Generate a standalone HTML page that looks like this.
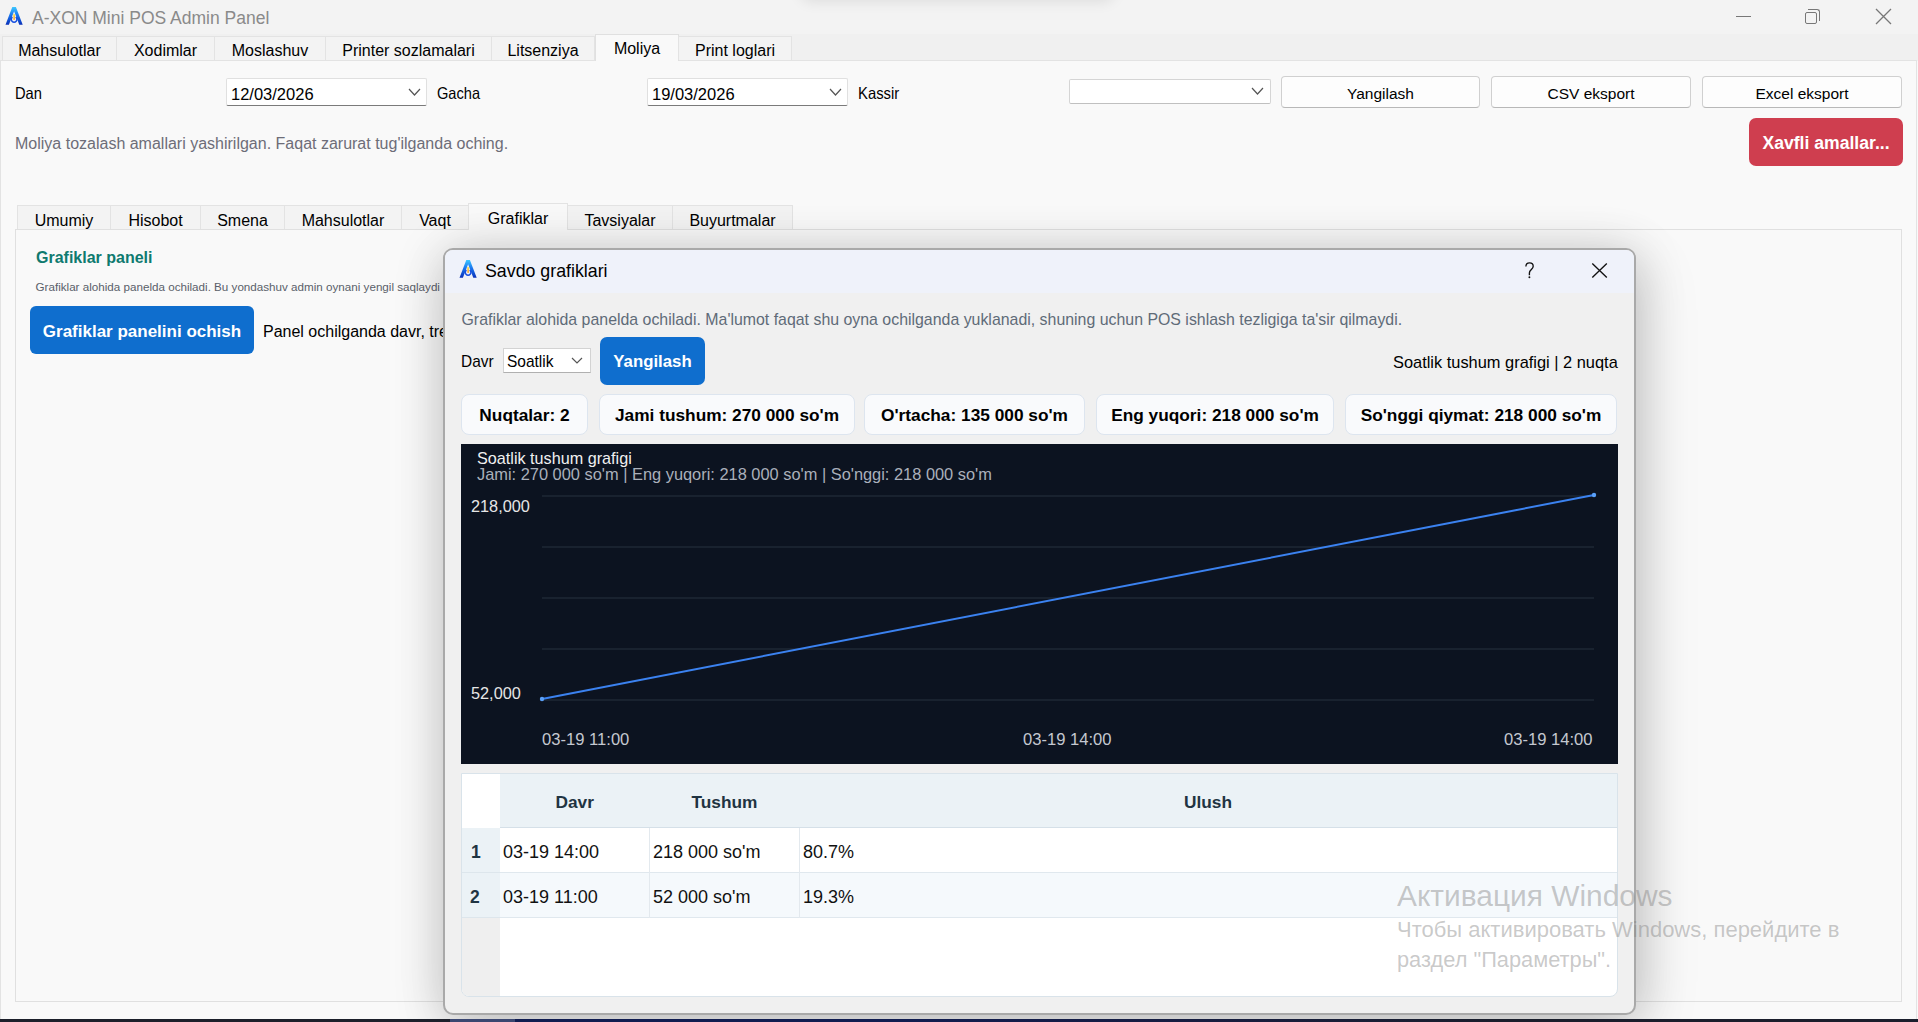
<!DOCTYPE html>
<html><head><meta charset="utf-8">
<style>
*{box-sizing:border-box;margin:0;padding:0}
html,body{width:1918px;height:1022px;overflow:hidden;background:#f9f9f9;font-family:"Liberation Sans",sans-serif;color:#000}
.a{position:absolute;white-space:nowrap}
#titlebar{position:absolute;left:0;top:0;width:1918px;height:34px;background:#f3f3f3}
#tabbar{position:absolute;left:0;top:34px;width:1918px;height:27px;background:#f0f0f0}
.tab{position:absolute;top:36px;height:24px;background:#f3f3f3;border:1px solid #e3e3e3;border-bottom:none;font-size:16px;text-align:center;line-height:28px}
.tab.sel{top:34px;height:27px;background:#f9f9f9;border-color:#e0e0e0;line-height:27px}
#content{position:absolute;left:0px;top:60px;width:1917px;height:960px;background:#f9f9f9;border-top:1px solid #e3e3e3;border-left:1px solid #e3e3e3;border-right:1px solid #e3e3e3}
.lbl{position:absolute;font-size:16px;line-height:16px}
.combo{position:absolute;background:#fff;border:1px solid #e0e0e0;border-bottom:1.5px solid #7a7a7a;border-radius:2px}
.btn{position:absolute;background:#fdfdfd;border:1px solid #d0d0d0;border-bottom-color:#b8b8b8;border-radius:4px;font-size:15.5px;text-align:center}
.chev{position:absolute;width:9px;height:9px;border-right:1.3px solid #444;border-bottom:1.3px solid #444;transform:rotate(45deg)}
.itab{position:absolute;top:205px;height:24px;background:#f3f3f3;border:1px solid #e3e3e3;border-bottom:none;font-size:16px;text-align:center;line-height:29px}
.itab.sel{top:203px;height:27px;background:#f9f9f9}
.card{position:absolute;top:394px;height:41px;background:#f9fafc;border:1px solid #dde5ef;border-radius:8px;font-weight:bold;font-size:17.3px;line-height:41px;text-align:center}
.th{position:absolute;top:794px;font-weight:bold;font-size:17.3px;line-height:17.3px;color:#1f3442}
.rn{position:absolute;font-weight:bold;font-size:17.5px;line-height:18px;color:#1f3442}
.td{position:absolute;font-size:18px;line-height:18px;color:#111}
</style></head>
<body>
<div id="titlebar"></div>
<div id="tabbar"></div>
<div id="content"></div>

<!-- title -->
<svg width="0" height="0" style="position:absolute"><defs>
<linearGradient id="g1" x1="0" y1="0" x2="0" y2="1"><stop offset="0" stop-color="#3cc8ff"/><stop offset="0.45" stop-color="#1a78f0"/><stop offset="1" stop-color="#0a30b8"/></linearGradient>
<linearGradient id="g2" x1="0" y1="0" x2="0" y2="1"><stop offset="0" stop-color="#ffe020"/><stop offset="1" stop-color="#ff8a00"/></linearGradient>
<symbol id="axon" viewBox="0 0 18 18"><path d="M7.3 0 L10.9 0 L17.7 17.7 L14.3 17.7 L9.1 4.2 L3.9 17.7 L0.5 17.7 Z" fill="url(#g1)"/>
<path d="M10.7 10.1 A2.8 2.8 0 1 1 7.5 10.1" fill="none" stroke="#1850e0" stroke-width="1.5"/>
<rect x="8.4" y="6.9" width="1.4" height="6.1" rx="0.7" fill="url(#g2)"/></symbol></defs></svg>
<svg class="a" style="left:5px;top:7px" width="18" height="18"><use href="#axon"/></svg>
<div class="a" style="left:32px;top:8px;font-size:17.5px;color:#8a8a8a;line-height:20px">A-XON Mini POS Admin Panel</div>
<!-- window controls -->
<div class="a" style="left:1736px;top:16px;width:15px;height:1px;background:#777"></div>
<div class="a" style="left:1805px;top:12px;width:12px;height:12px;border:1.3px solid #777;border-radius:2px"></div>
<div class="a" style="left:1808px;top:9px;width:12px;height:12px;border-top:1.3px solid #777;border-right:1.3px solid #777;border-radius:0 3px 0 0"></div>
<svg class="a" style="left:1875px;top:8px" width="17" height="17" viewBox="0 0 17 17"><path d="M1 1L16 16M16 1L1 16" stroke="#777" stroke-width="1.3"/></svg>

<div class="a" style="left:800px;top:-24px;width:315px;height:24px;border-radius:12px;box-shadow:0 2px 14px rgba(0,0,0,0.09);background:#f3f3f3"></div>
<!-- top tabs -->
<div class="tab" style="left:2px;width:115px">Mahsulotlar</div>
<div class="tab" style="left:116px;width:99px">Xodimlar</div>
<div class="tab" style="left:214px;width:112px">Moslashuv</div>
<div class="tab" style="left:325px;width:167px">Printer sozlamalari</div>
<div class="tab" style="left:491px;width:104px">Litsenziya</div>
<div class="tab sel" style="left:595px;width:84px">Moliya</div>
<div class="tab" style="left:678px;width:114px">Print loglari</div>

<!-- filter row -->
<div class="lbl" style="left:15px;top:84.8px;font-size:16.5px;line-height:16.5px;transform:scaleX(0.89);transform-origin:0 0">Dan</div>
<div class="combo" style="left:226px;top:78px;width:201px;height:28px"></div>
<div class="lbl" style="left:231px;top:85.6px;font-size:16.5px;line-height:16.5px">12/03/2026</div>
<svg class="a" style="left:408px;top:88px" width="13" height="8" viewBox="-1 -1 13 8"><path d="M0 0L5.5 6L11 0" fill="none" stroke="#555" stroke-width="1.2"/></svg>
<div class="lbl" style="left:437px;top:84.8px;font-size:16.5px;line-height:16.5px;transform:scaleX(0.885);transform-origin:0 0">Gacha</div>
<div class="combo" style="left:647px;top:78px;width:201px;height:28px"></div>
<div class="lbl" style="left:652px;top:85.6px;font-size:16.5px;line-height:16.5px">19/03/2026</div>
<svg class="a" style="left:829px;top:88px" width="13" height="8" viewBox="-1 -1 13 8"><path d="M0 0L5.5 6L11 0" fill="none" stroke="#555" stroke-width="1.2"/></svg>
<div class="lbl" style="left:857.5px;top:84.8px;font-size:16.5px;line-height:16.5px;transform:scaleX(0.9);transform-origin:0 0">Kassir</div>
<div class="a" style="left:1069px;top:79px;width:202px;height:25px;background:#fff;border:1px solid #d5d5d5;border-bottom-color:#c0c0c0;border-radius:2px"></div>
<svg class="a" style="left:1251px;top:87px" width="13" height="8" viewBox="-1 -1 13 8"><path d="M0 0L5.5 6L11 0" fill="none" stroke="#555" stroke-width="1.2"/></svg>
<div class="btn" style="left:1281px;top:76px;width:199px;height:32px;line-height:33px">Yangilash</div>
<div class="btn" style="left:1491px;top:76px;width:200px;height:32px;line-height:33px">CSV eksport</div>
<div class="btn" style="left:1702px;top:76px;width:200px;height:32px;line-height:33px">Excel eksport</div>

<div class="lbl" style="left:15px;top:136px;color:#6d6d78">Moliya tozalash amallari yashirilgan. Faqat zarurat tug'ilganda oching.</div>
<div class="a" style="left:1749px;top:118px;width:154px;height:48px;background:#cf3e4f;border-radius:7px;color:#fff;font-weight:bold;font-size:17.6px;line-height:51px;text-align:center">Xavfli amallar...</div>

<!-- inner tabs -->
<div class="a" style="left:15px;top:229px;width:1887px;height:773px;border:1px solid #e0e0e0;background:#f9f9f9"></div>
<div class="itab" style="left:17px;width:94px">Umumiy</div>
<div class="itab" style="left:110px;width:91px">Hisobot</div>
<div class="itab" style="left:200px;width:85px">Smena</div>
<div class="itab" style="left:284px;width:118px">Mahsulotlar</div>
<div class="itab" style="left:401px;width:68px">Vaqt</div>
<div class="itab sel" style="left:468px;width:100px">Grafiklar</div>
<div class="itab" style="left:567px;width:106px">Tavsiyalar</div>
<div class="itab" style="left:672px;width:121px">Buyurtmalar</div>

<div class="a" style="left:36px;top:249px;font-size:16px;font-weight:bold;color:#0f7a6f">Grafiklar paneli</div>
<div class="a" style="left:35.5px;top:280.8px;font-size:11.65px;line-height:11.65px;color:#5a5f6a">Grafiklar alohida panelda ochiladi. Bu yondashuv admin oynani yengil saqlaydi</div>
<div class="a" style="left:30px;top:306px;width:224px;height:48px;background:#0f6ece;border-radius:6px;color:#fff;font-weight:bold;font-size:17px;line-height:52px;text-align:center">Grafiklar panelini ochish</div>
<div class="lbl" style="left:263px;top:324px">Panel ochilganda davr, trend va eng kuchli davrlar ko'rinadi.</div>

<!-- dialog placeholder -->
<div id="dlg" class="a" style="left:443px;top:248px;width:1193px;height:767px;background:#f0f0f0;border:2px solid #a9a9a9;border-radius:10px;box-shadow:0 6px 50px rgba(0,0,0,0.2), 10px 14px 60px rgba(0,0,0,0.1);overflow:hidden">
 <div class="a" style="left:0;top:0;width:1189px;height:43px;background:#eff2fa"></div>
</div>
<!-- dialog title -->
<svg class="a" style="left:459px;top:260px" width="18" height="18"><use href="#axon"/></svg>
<div class="a" style="left:485px;top:262.5px;font-size:17.8px;line-height:17.8px">Savdo grafiklari</div>
<svg class="a" style="left:1520px;top:258px" width="20" height="26" viewBox="1520 258 20 26"><path d="M1525.9 266.6 C1525.9 264.3 1527.6 262.9 1529.6 262.9 C1531.7 262.9 1533.2 264.4 1533.2 266.3 C1533.2 268.2 1532 269.1 1530.9 270 C1529.8 270.9 1529.4 271.6 1529.4 273 L1529.4 275.2" fill="none" stroke="#111" stroke-width="1.35"/><circle cx="1529.4" cy="277.3" r="0.95" fill="#111"/></svg>
<svg class="a" style="left:1590px;top:261px" width="20" height="20" viewBox="1590 261 20 20"><path d="M1592.3 263.5L1606.8 277.6M1606.8 263.5L1592.3 277.6" stroke="#111" stroke-width="1.35"/></svg>

<div class="a" style="left:461.5px;top:311.8px;font-size:15.9px;line-height:15.9px;color:#5f6b78">Grafiklar alohida panelda ochiladi. Ma'lumot faqat shu oyna ochilganda yuklanadi, shuning uchun POS ishlash tezligiga ta'sir qilmaydi.</div>

<div class="a" style="left:461px;top:353.5px;font-size:16.6px;line-height:16.6px;transform:scaleX(0.93);transform-origin:0 0">Davr</div>
<div class="a" style="left:503px;top:348px;width:88px;height:25px;background:#fff;border:1px solid #d3d3d3;border-bottom-color:#b0b0b0"></div>
<div class="a" style="left:507px;top:353.5px;font-size:16.6px;line-height:16.6px;transform:scaleX(0.933);transform-origin:0 0">Soatlik</div>
<svg class="a" style="left:571px;top:357px" width="12" height="7" viewBox="-1 -1 12 7"><path d="M0 0L5.0 5L10 0" fill="none" stroke="#555" stroke-width="1.2"/></svg>
<div class="a" style="left:600px;top:337px;width:105px;height:48px;background:#0f6ece;border-radius:7px;color:#fff;font-weight:bold;font-size:16.8px;line-height:50px;text-align:center">Yangilash</div>
<div class="a" style="right:300px;top:354px;font-size:16.4px;line-height:16.4px;text-align:right;width:400px;left:auto"></div>
<div class="a" style="left:1393px;top:354px;font-size:16.4px;line-height:16.4px">Soatlik tushum grafigi | 2 nuqta</div>

<div class="card" style="left:461px;width:127px">Nuqtalar: 2</div>
<div class="card" style="left:599px;width:256px">Jami tushum: 270 000 so'm</div>
<div class="card" style="left:864px;width:221px">O'rtacha: 135 000 so'm</div>
<div class="card" style="left:1096px;width:238px">Eng yuqori: 218 000 so'm</div>
<div class="card" style="left:1345px;width:272px">So'nggi qiymat: 218 000 so'm</div>

<!-- chart -->
<svg class="a" style="left:461px;top:444px" width="1157" height="320" viewBox="461 444 1157 320">
 <rect x="461" y="444" width="1157" height="320" fill="#0c1320"/>
 <g stroke="#19222f" stroke-width="2">
  <line x1="542" y1="496" x2="1594" y2="496"/>
  <line x1="542" y1="547" x2="1594" y2="547"/>
  <line x1="542" y1="598" x2="1594" y2="598"/>
  <line x1="542" y1="649" x2="1594" y2="649"/>
  <line x1="542" y1="700" x2="1594" y2="700"/>
 </g>
 <line x1="542" y1="699" x2="1594" y2="495" stroke="#3b82f0" stroke-width="2"/>
 <circle cx="542" cy="699" r="2.2" fill="#5aa0f8"/>
 <circle cx="1594" cy="495" r="2.2" fill="#5aa0f8"/>
</svg>
<div class="a" style="left:477px;top:449.7px;font-size:16.2px;line-height:16.2px;color:#f0f0f0">Soatlik tushum grafigi</div>
<div class="a" style="left:477px;top:465.5px;font-size:16.4px;line-height:16.4px;color:#aab0bb">Jami: 270 000 so'm | Eng yuqori: 218 000 so'm | So'nggi: 218 000 so'm</div>
<div class="a" style="left:471px;top:497.5px;font-size:16.3px;line-height:16.3px;color:#e6e6e6">218,000</div>
<div class="a" style="left:471px;top:685px;font-size:16.3px;line-height:16.3px;color:#e6e6e6">52,000</div>
<div class="a" style="left:542px;top:732.3px;font-size:16.6px;line-height:16.6px;color:#c4c8d0">03-19 11:00</div>
<div class="a" style="left:1023px;top:732.3px;font-size:16.6px;line-height:16.6px;color:#c4c8d0">03-19 14:00</div>
<div class="a" style="left:1504px;top:732.3px;font-size:16.6px;line-height:16.6px;color:#c4c8d0">03-19 14:00</div>

<!-- table -->
<div class="a" style="left:461px;top:773px;width:1157px;height:224px;background:#fff;border:1px solid #d9e3ea;border-radius:0 0 8px 8px;overflow:hidden">
 <div class="a" style="left:38px;top:0;width:1118px;height:54px;background:#ebf2f6;border-bottom:1px solid #d5e0e8"></div>
 <div class="a" style="left:0;top:54px;width:38px;height:89px;background:#ebf2f6"></div>
 <div class="a" style="left:0;top:144px;width:38px;height:90px;background:#efefef"></div>
 <div class="a" style="left:0;top:98px;width:1156px;height:46px;background:#f5f9fc;border-top:1px solid #e0e8ee;border-bottom:1px solid #e0e8ee"></div>
 <div class="a" style="left:0;top:98px;width:38px;height:46px;background:#ebf2f6;border-top:1px solid #dde6ec;border-bottom:1px solid #dde6ec"></div>
 <div class="a" style="left:187px;top:54px;width:1px;height:90px;background:#e3e9ee"></div>
 <div class="a" style="left:337px;top:54px;width:1px;height:90px;background:#e3e9ee"></div>
</div>
<div class="th" style="left:555.5px">Davr</div>
<div class="th" style="left:691.5px">Tushum</div>
<div class="th" style="left:1184px">Ulush</div>
<div class="rn" style="left:471px;top:843.3px">1</div>
<div class="rn" style="left:470px;top:888.1px">2</div>
<div class="td" style="left:503px;top:843.3px">03-19 14:00</div>
<div class="td" style="left:653px;top:843.3px">218 000 so'm</div>
<div class="td" style="left:803px;top:843.3px">80.7%</div>
<div class="td" style="left:503px;top:888.1px">03-19 11:00</div>
<div class="td" style="left:653px;top:888.1px">52 000 so'm</div>
<div class="td" style="left:803px;top:888.1px">19.3%</div>

<!-- watermark -->
<div class="a" style="left:1397px;top:881px;font-size:29.9px;line-height:29.9px;color:rgba(125,125,125,0.42)">Активация Windows</div>
<div class="a" style="left:1397px;top:919px;font-size:22px;line-height:22px;color:rgba(125,125,125,0.42)">Чтобы активировать Windows, перейдите в</div>
<div class="a" style="left:1397px;top:948.7px;font-size:21.8px;line-height:21.8px;color:rgba(125,125,125,0.42)">раздел "Параметры".</div>


<div class="a" style="left:0;top:1019px;width:1918px;height:3px;background:linear-gradient(90deg,#1c1f2a 0,#1c1f2a 450px,#3a4670 450px,#3a4670 515px,#101c50 515px,#101c50 900px,#161d40 1200px,#1a1e2c 1500px,#1a1e2c 100%)"></div>
</body></html>
